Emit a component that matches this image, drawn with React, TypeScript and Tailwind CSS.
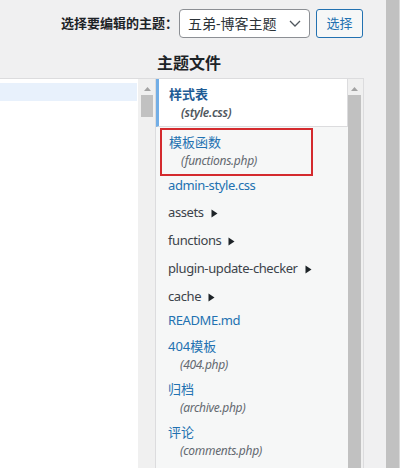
const font = {
  fontFamily: '"Segoe UI", "Noto Sans", "Noto Sans CJK SC", sans-serif',
};

type Entry =
  | { kind: "file"; name: string; file?: string; h: number; pt: number }
  | { kind: "dir"; name: string };

const entries: Entry[] = [
  { kind: "file", name: "admin-style.css", h: 23, pt: 0 },
  { kind: "dir", name: "assets" },
  { kind: "dir", name: "functions" },
  { kind: "dir", name: "plugin-update-checker" },
  { kind: "dir", name: "cache" },
  { kind: "file", name: "README.md", h: 23, pt: 0 },
  { kind: "file", name: "404模板", file: "404.php", h: 43, pt: 2 },
  { kind: "file", name: "归档", file: "archive.php", h: 43, pt: 2 },
  { kind: "file", name: "评论", file: "comments.php", h: 43, pt: 2 },
];

function Arrow() {
  return (
    <svg width="9" height="6" viewBox="0 0 9 6" className="mx-auto">
      <path d="M4.5 1L8 5H1z" fill="#a3a3a3" />
    </svg>
  );
}

function FolderTri() {
  return (
    <svg width="7" height="9" viewBox="0 0 7 9" className="ml-[7px]">
      <path d="M0.5 0.5L6.5 4.5L0.5 8.5z" fill="#1d2327" />
    </svg>
  );
}

function Row({ e }: { e: Entry }) {
  if (e.kind === "dir") {
    return (
      <div className="flex h-[28px] items-center pl-[12px] text-[13px] tracking-[-0.4px] text-[#3c434a]">
        <span>{e.name}</span>
        <FolderTri />
      </div>
    );
  }
  return (
    <div className="pl-[12px]" style={{ height: e.h, paddingTop: e.pt }}>
      <div
        className="text-[13px] leading-[18px] tracking-[-0.4px] text-[#2271b1]"
        style={e.file ? { lineHeight: "20px", letterSpacing: 0 } : undefined}
      >
        {e.name}
      </div>
      {e.file && (
        <div className="pl-[12px] text-[12px] italic leading-[18px] tracking-[-0.3px] text-[#646970]">
          ({e.file})
        </div>
      )}
    </div>
  );
}

export default function App() {
  return (
    <div className="flex h-[468px] w-[400px] overflow-hidden bg-[#f0f0f1]" style={font}>
      <div className="flex w-[386px] flex-col">
        <div className="flex items-center justify-end pr-[23px] pt-[9px]">
          <span className="mr-[1px] text-[13px] font-semibold text-[#1d2327]">选择要编辑的主题：</span>
          <div className="flex h-[29px] w-[131px] items-center justify-between rounded-[4px] border border-[#8c8f94] bg-white pl-[8px] pr-[8px]">
            <span className="text-[14px] text-[#2c3338]">五弟-博客主题</span>
            <svg width="12" height="7" viewBox="0 0 12 7">
              <path d="M1 1l5 5 5-5" fill="none" stroke="#50575e" strokeWidth="1.3" />
            </svg>
          </div>
          <div className="ml-[6px] flex h-[29px] w-[47px] items-center justify-center rounded-[3px] border border-[#2271b1] bg-[#f6f7f7] text-[13px] text-[#2271b1]">
            选择
          </div>
        </div>

        <div className="mt-[14px] flex">
          <div className="w-[157px]" />
          <h2 className="text-[16px] font-bold leading-[22px] text-[#1d2327]">主题文件</h2>
        </div>

        <div className="mt-[4px] flex h-[400px]">
          {/* editor area */}
          <div className="flex w-[155px] flex-col border-t border-[#dcdcde]">
            <div className="flex flex-1">
              <div className="w-[138px] bg-white pt-[4px]">
                <div className="h-[18px] w-[137px] bg-[#e8f1fc]" />
              </div>
              <div className="flex w-[17px] flex-col bg-[#f0f0f0] pl-[3px] pr-[2px]">
                <div className="flex h-[16px] items-center pt-[3px]">
                  <Arrow />
                </div>
                <div className="h-[22px] bg-[#c1c1c1]" />
              </div>
            </div>
          </div>

          {/* file list */}
          <div className="flex w-[209px] border-l border-r border-t border-[#dcdcde] bg-[#f6f7f7]">
            <div className="w-[192px]">
              <div className="h-[48px] border-b border-r border-[#dcdcde] border-l-[3px] border-l-[#72aee6] bg-white pl-[10px] pt-[5px]">
                <div className="text-[13px] font-semibold leading-[20px] text-[#1e5b94]">样式表</div>
                <div className="pl-[12px] text-[12px] font-semibold italic leading-[18px] tracking-[-0.3px] text-[#50575e]">
                  (style.css)
                </div>
              </div>
              <div className="h-[49px] pt-[1px] pl-[4px]">
                <div className="h-[48px] w-[153px] border-2 border-[#d42a2e] pl-[7px] pt-[2px]">
                  <div className="text-[13px] leading-[20px] text-[#2271b1]">模板函数</div>
                  <div className="pl-[12px] text-[12px] italic leading-[18px] tracking-[-0.3px] text-[#646970]">
                    (functions.php)
                  </div>
                </div>
              </div>
              {entries.map((e) => (
                <Row key={e.name} e={e} />
              ))}
            </div>
            <div className="flex w-[15px] flex-col bg-[#f0f0f0]">
              <div className="flex h-[16px] w-[13px] items-center pt-[3px]">
                <Arrow />
              </div>
              <div className="flex-1 w-[13px] bg-[#c1c1c1]" />
            </div>
          </div>
        </div>
      </div>
      <div className="w-[13px] bg-[#c1c1c1]" />
      <div className="w-[1px] bg-[#dadada]" />
    </div>
  );
}
